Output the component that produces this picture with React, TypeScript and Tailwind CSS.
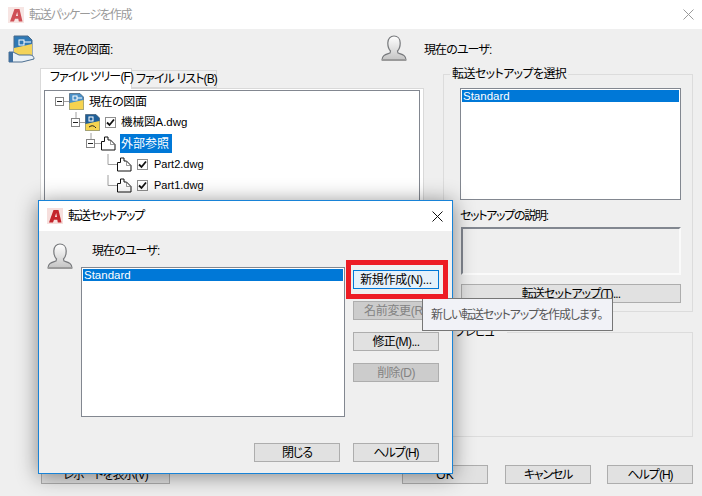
import type { ReactNode } from "react";

const FONT = "font-['Liberation_Sans','Noto_Sans_CJK_JP',sans-serif] [font-feature-settings:'palt']";

const AcadIcon = ({ faded }: { faded?: boolean }) => (
  <svg width="16" height="16" viewBox="0 0 16 16" className={faded ? "opacity-80" : ""}>
    <rect width="16" height="16" fill="#f6dfdd" />
    <path d="M2 14.5 L6.5 2 H11.5 L14.5 14.5 H10.8 L10.3 11.8 H7 L6 14.5 Z M7.9 9 H10 L9.2 5 Z" fill="#c4242c" fillRule="evenodd" />
  </svg>
);

const CloseIcon = ({ color }: { color: string }) => (
  <svg width="11" height="11" viewBox="0 0 11 11">
    <path d="M0.5 0.5 L10.5 10.5 M10.5 0.5 L0.5 10.5" stroke={color} strokeWidth="1" fill="none" />
  </svg>
);

const UserIcon = () => (
  <svg width="26" height="27" viewBox="0 0 26 27">
    <defs>
      <linearGradient id="userFill" x1="0" y1="0" x2="0" y2="1">
        <stop offset="0" stopColor="#ffffff" />
        <stop offset="1" stopColor="#c4c4c4" />
      </linearGradient>
    </defs>
    <path d="M1 25 C1 20 5 19.5 9 18 L9.5 16 C7.5 14 6.8 11 6.8 8 C6.8 3.5 9.5 1 13 1 C16.5 1 19.2 3.5 19.2 8 C19.2 11 18.5 14 16.5 16 L17 18 C21 19.5 25 20 25 25 Z" fill="url(#userFill)" stroke="#77797c" strokeWidth="1.2" />
    <rect x="1" y="24" width="24" height="2" fill="#9a9a9a" />
  </svg>
);

const DrawingHandIcon = () => (
  <svg width="27" height="28" viewBox="0 0 27 28">
    <path d="M6 1 H20 L24 5 V21 H6 Z" fill="#2f79b5" stroke="#4b6a8a" />
    <path d="M6 13 L24 9 V21 H6 Z" fill="#f3d35a" />
    <rect x="11" y="5" width="5" height="5" fill="none" stroke="#ffffff" />
    <path d="M16 7 H23" stroke="#ffffff" />
    <path d="M1 17 H5 L11 20 H22 C25 20 26 22 26 24 L14 27 H1 Z" fill="#e9f0f6" stroke="#4d6f91" />
    <rect x="1" y="17" width="4" height="10" fill="#3f6f9f" />
  </svg>
);

const DrawingIcon = ({ dark }: { dark?: boolean }) => (
  <svg width="15" height="17" viewBox="0 0 15 17" className="shrink-0">
    <path d="M0.5 0.5 H11 L14.5 4 V16.5 H0.5 Z" fill={dark ? "#1f5f98" : "#4a90c8"} stroke="#34495e" strokeWidth="0.6" />
    <path d="M0.5 10 L14.5 7 V16.5 H0.5 Z" fill="#f6d34f" />
    <rect x="4" y="3" width="4" height="4" fill="none" stroke="#ffffff" />
    {dark ? <path d="M4 13 Q8 10 11 14" stroke="#222222" fill="none" /> : <path d="M8 5 H13" stroke="#ffffff" />}
  </svg>
);

const XrefIcon = () => (
  <svg width="15" height="15" viewBox="0 0 15 15" className="shrink-0">
    <path d="M0.5 5.5 H3.5 M3.5 5.5 V1 H7 V4 H9.5 L14 8.5 V14 H0.5 V5.5" fill="#ffffff" stroke="#111111" strokeWidth="1" />
    <path d="M9.5 4 V8.5 H14" fill="none" stroke="#555555" strokeWidth="0.6" />
  </svg>
);

const CheckBox = () => (
  <span className="w-[11px] h-[11px] shrink-0 border border-[#8f8f8f] bg-white flex items-center justify-center">
    <svg width="9" height="9" viewBox="0 0 9 9">
      <path d="M1 4.5 L3.5 7 L8 1.5" stroke="#111111" strokeWidth="1.8" fill="none" />
    </svg>
  </span>
);

const Expander = ({ x }: { x: number }) => (
  <>
    <rect x={x + 0.5} y="6.5" width="8" height="8" fill="#ffffff" stroke="#848484" />
    <path d={`M${x + 2} 10.5 H${x + 7}`} stroke="#222222" />
  </>
);

const TreeRow = ({ width, lines, box, children }: { width: number; lines: string; box?: number; children: ReactNode }) => (
  <div className="h-[21px] flex items-center whitespace-nowrap">
    <svg width={width} height="21" viewBox={`0 0 ${width} 21`} className="shrink-0">
      <path d={lines} stroke="#a0a0a0" fill="none" />
      {box !== undefined && <Expander x={box} />}
    </svg>
    {children}
  </div>
);

const Btn = ({ className, children }: { className: string; children: ReactNode }) => (
  <div className={`h-[19px] flex items-center justify-center whitespace-nowrap border border-[#adadad] bg-[#e1e1e1] text-[12px] leading-none text-black ${className}`}>
    {children}
  </div>
);

const ListBox = ({ className }: { className: string }) => (
  <div className={`border border-[#828790] bg-white p-[1px] ${className}`}>
    <div className="h-[12px] pl-[1px] bg-[#0078d7] text-white text-[11.5px] leading-[12px]">Standard</div>
  </div>
);

const TransferSetupDialog = () => (
  <div className="absolute left-[38px] top-[200px] w-[415px] h-[274px] border border-[#1883d7] bg-[#efefef] shadow-[0_2px_20px_rgba(0,0,0,0.45)] flex flex-col">
    <div className="h-[30px] shrink-0 bg-white flex items-center pl-[8px] pr-[9px]">
      <AcadIcon />
      <span className="ml-[5px] text-[12px] tracking-[-1.2px] text-black">転送セットアップ</span>
      <span className="ml-auto flex"><CloseIcon color="#111111" /></span>
    </div>
    <div className="flex-1 flex">
      <div className="w-[42px] shrink-0 pt-[12px] pl-[8px]"><UserIcon /></div>
      <div className="w-[264px] shrink-0">
        <div className="h-[36px] pl-[11px] pt-[12px] text-[12px] tracking-[-0.9px] leading-[16px]">現在のユーザ:</div>
        <ListBox className="h-[150px]" />
        <div className="flex justify-end gap-[13px] w-[358px] mt-[26px]">
          <Btn className="w-[86px] shrink-0 tracking-[-1px]">閉じる</Btn>
          <Btn className="w-[86px] shrink-0 tracking-[-1px]">ヘルプ(H)</Btn>
        </div>
      </div>
      <div className="ml-[8px] w-[86px] pt-[39px] flex flex-col gap-[12px]">
        <Btn className="!border-[#0078d7] !bg-[#e5f1fb] tracking-[-0.3px]">新規作成(N)...</Btn>
        <Btn className="!bg-[#cccccc] !text-[#838383] !justify-start pl-[10px] overflow-hidden tracking-[-0.3px]">名前変更(R)...</Btn>
        <Btn className="tracking-[-0.6px]">修正(M)...</Btn>
        <Btn className="!bg-[#cccccc] !text-[#838383] tracking-[-0.6px]">削除(D)</Btn>
      </div>
    </div>
  </div>
);

export default function App() {
  return (
    <div className={`relative w-[702px] h-[496px] overflow-hidden bg-[#efefef] text-black ${FONT}`}>
      <div className="h-[29px] bg-white flex items-center pl-[8px] pr-[8px]">
        <AcadIcon faded />
        <span className="ml-[5px] text-[12px] tracking-[-1.2px] text-[#9a9a9a]">転送パッケージを作成</span>
        <span className="ml-auto flex"><CloseIcon color="#9a9a9a" /></span>
      </div>

      <div className="h-[38px] flex">
        <div className="pl-[8px] pt-[6px] w-[53px] shrink-0"><DrawingHandIcon /></div>
        <div className="w-[328px] shrink-0 pt-[13px] text-[12px] tracking-[-0.5px] leading-[16px]">現在の図面:</div>
        <div className="pt-[6px] w-[43px] shrink-0"><UserIcon /></div>
        <div className="pt-[13px] text-[12px] tracking-[-0.9px] leading-[16px]">現在のユーザ:</div>
      </div>

      <div className="flex">
        <div className="ml-[40px] w-[384px] shrink-0">
          <div className="flex items-end h-[21px] text-[12px] tracking-[-0.9px] leading-none whitespace-nowrap">
            <div className="w-[92px] h-[21px] pt-[2px] pl-[9px] bg-white border border-b-0 border-[#d9d9d9] relative top-[1px]">ファイル ツリー(F)</div>
            <div className="w-[85px] h-[18px] pt-[2px] pl-[4px] bg-[#f0f0f0] border border-l-0 border-[#d9d9d9]">ファイル リスト(B)</div>
          </div>
          <div className="h-[368px] border border-[#d9d9d9] bg-white pt-[1px] px-[3px] pb-[3px]">
            <div className="h-full border border-[#828790] text-[12px] leading-none">
              <TreeRow width={24} lines="M18 10.5 H24" box={10}>
                <DrawingIcon />
                <span className="ml-[5px] tracking-[-0.4px]">現在の図面</span>
              </TreeRow>
              <TreeRow width={40} lines="M31 0 V6 M35 10.5 H40" box={26}>
                <DrawingIcon dark />
                <span className="ml-[5px]"><CheckBox /></span>
                <span className="ml-[5px] text-[11.5px]">機械図A.dwg</span>
              </TreeRow>
              <TreeRow width={56} lines="M46 0 V6 M50 10.5 H56" box={41}>
                <XrefIcon />
                <span className="ml-[4px] h-[19px] w-[52px] bg-[#0078d7] text-white flex items-center pl-[1px]">外部参照</span>
              </TreeRow>
              <TreeRow width={72} lines="M63 0 V10.5 H72">
                <XrefIcon />
                <span className="ml-[5px]"><CheckBox /></span>
                <span className="ml-[6px] text-[11px]">Part2.dwg</span>
              </TreeRow>
              <TreeRow width={72} lines="M63 0 V10.5 H72">
                <XrefIcon />
                <span className="ml-[5px]"><CheckBox /></span>
                <span className="ml-[6px] text-[11px]">Part1.dwg</span>
              </TreeRow>
            </div>
          </div>
        </div>

        <div className="ml-[19px] w-[250px] shrink-0">
          <fieldset className="h-[245px] border border-[#dcdcdc]">
            <legend className="ml-[6px] px-[2px] text-[12px] tracking-[-0.6px] leading-[14px]">転送セットアップを選択</legend>
            <div className="pl-[16px] pr-[11px]">
              <ListBox className="mt-[7px] h-[112px]" />
              <div className="mt-[8px] h-[18px] text-[12px] tracking-[-1.3px] leading-[16px]">セットアップの説明:</div>
              <div className="mt-[1px] ml-[1px] h-[48px] border-2 border-[#828790] border-r-[#fafafa] border-b-[#fafafa] bg-[#efefef]" />
              <Btn className="mt-[9px] ml-[1px] tracking-[-0.9px]">転送セットアップ(T)...</Btn>
            </div>
          </fieldset>
          <fieldset className="mt-[13px] h-[112px] border border-[#dcdcdc]">
            <legend className="ml-[9px] px-[2px] text-[12px] tracking-[-1px] leading-[14px]">プレビュー</legend>
          </fieldset>
        </div>
      </div>

      <div className="flex mt-[9px] pl-[41px] pr-[9px]">
        <Btn className="w-[129px] tracking-[-1px]">レポートを表示(V)</Btn>
        <Btn className="w-[86px] ml-auto">OK</Btn>
        <Btn className="w-[86px] ml-[17px] tracking-[-1.2px]">キャンセル</Btn>
        <Btn className="w-[86px] ml-[16px] tracking-[-1px]">ヘルプ(H)</Btn>
      </div>

      <TransferSetupDialog />

      <div className="absolute left-[422px] top-[298px] w-[191px] h-[33px] border border-[#767676] bg-[#f1f2f7] flex items-center pl-[8px] whitespace-nowrap text-[12px] tracking-[-1.1px] text-[#575757]">
        新しい転送セットアップを作成します。
      </div>
      <div className="absolute left-[346px] top-[260px] w-[102px] h-[39px] border-[5px] border-[#ed1c24]" />
    </div>
  );
}
